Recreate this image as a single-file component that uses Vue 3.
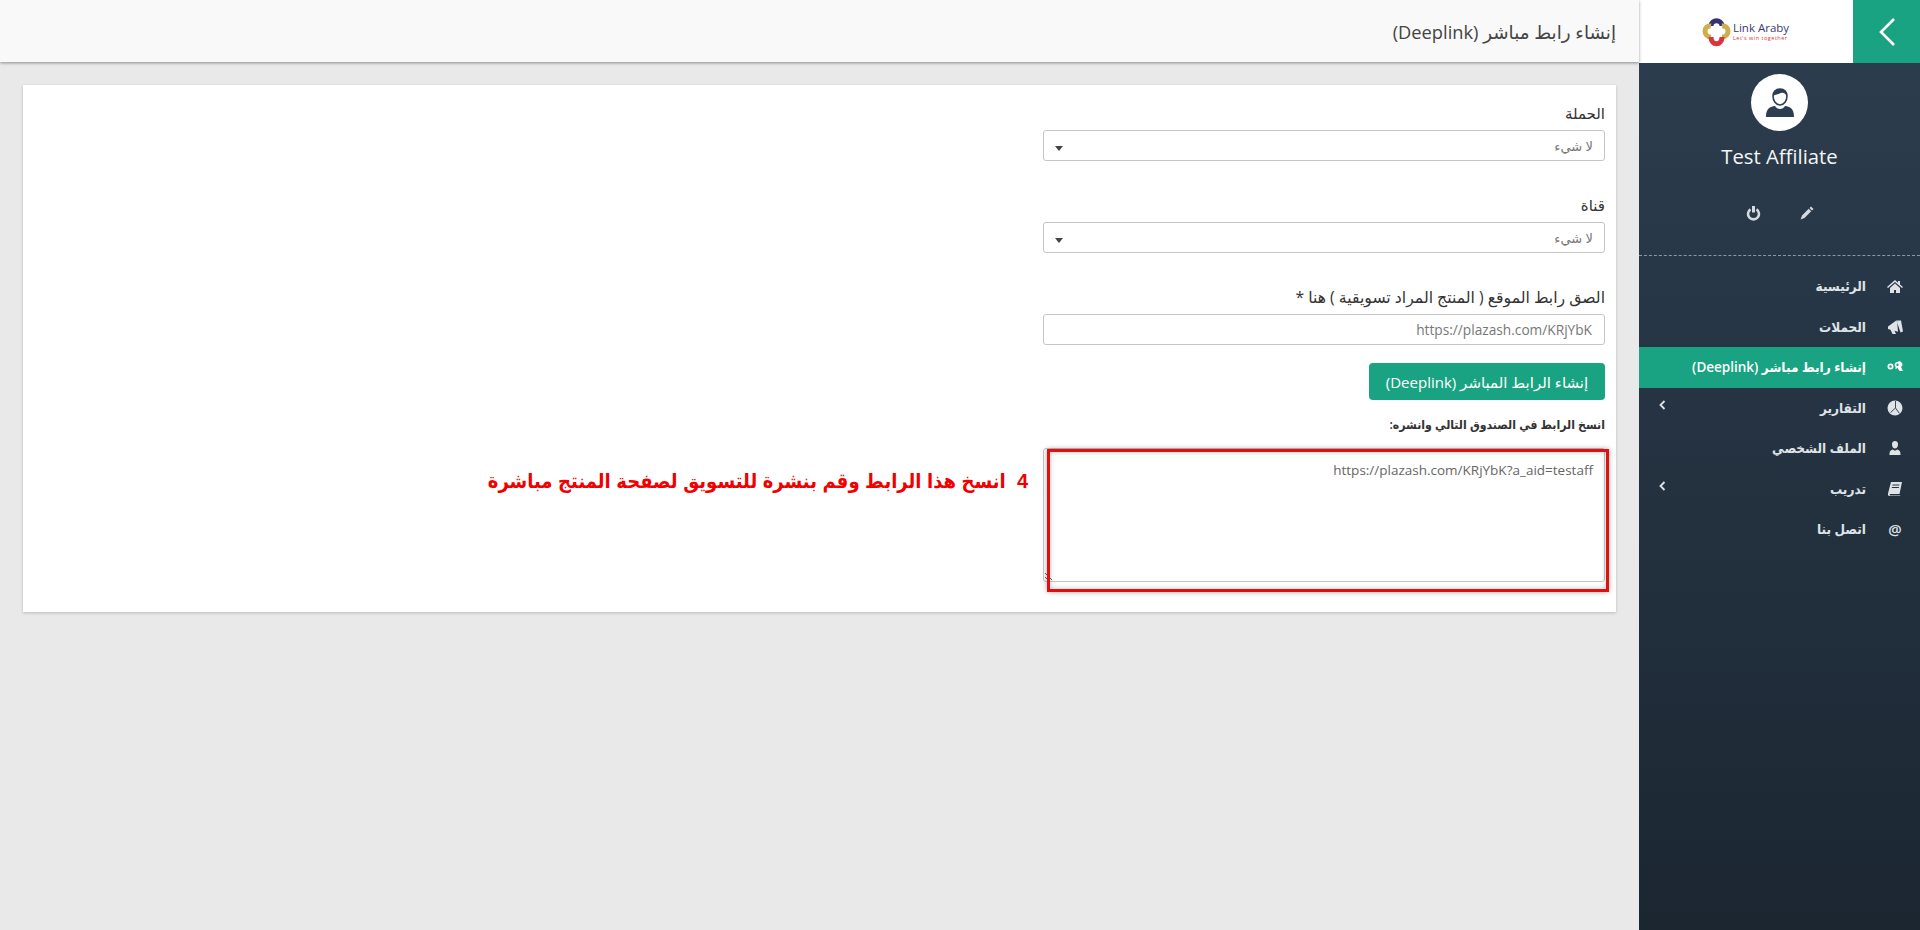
<script setup>
const menu = [
  { label: 'الرئيسية', icon: 'home' },
  { label: 'الحملات', icon: 'horn' },
  { label: 'إنشاء رابط مباشر (Deeplink)', icon: 'link', active: true },
  { label: 'التقارير', icon: 'pie', sub: true },
  { label: 'الملف الشخصي', icon: 'user' },
  { label: 'تدريب', icon: 'book', sub: true },
  { label: 'اتصل بنا', icon: 'at' }
]
const fields = [
  { label: 'الحملة' },
  { label: 'قناة' }
]
</script>

<template>
  <div class="page" dir="rtl">
    <aside class="side">
      <div class="brand">
        <button class="toggle" aria-label="toggle">
          <svg width="18" height="30" viewBox="0 0 18 30"><path d="M16 2 3 15l13 13" fill="none" stroke="#fff" stroke-width="2.6"/></svg>
        </button>
        <div class="logo" dir="ltr">
          <svg width="31" height="32" viewBox="0 0 31 32">
            <path d="M10 10C10 3 21 3 21 10" fill="none" stroke="#34336f" stroke-width="5"/>
            <path d="M10 10C2 9 2 21 10 21" fill="none" stroke="#cfae4e" stroke-width="5"/>
            <path d="M21 10C29 9 29 21 21 21" fill="none" stroke="#cfae4e" stroke-width="5"/>
            <path d="M10 21C10 30 21 30 21 21" fill="none" stroke="#d8363c" stroke-width="5"/>
          </svg>
          <div class="logo-text">
            <span class="logo-name">Link Araby</span>
            <span class="logo-tag">Let's win together</span>
          </div>
        </div>
      </div>
      <div class="profile">
        <div class="avatar">
          <svg width="28" height="30" viewBox="0 0 28 30">
            <path d="M14 1c4.500 0 7 3 7 7 0 4.500-3 9-7 9s-7-4.500-7-9c0-4 2.500-7 7-7z" fill="none" stroke="#2c3e50" stroke-width="1.600"/>
            <path d="M7 8c0-4 3-7 7-7s7 3 7 7c-2-3-4-4-6-3-2 1-5 1-8 3z" fill="#2c3e50"/>
            <path d="M0 29c0-6 2-9 5-10 2-.7 3-1 4-1 1 2 3 3 5 3s4-1 5-3c1 0 2 .3 4 1 3 1 5 4 5 10z" fill="#2c3e50"/>
          </svg>
        </div>
        <div class="name" dir="ltr">Test Affiliate</div>
        <div class="tools">
          <svg width="14" height="14" viewBox="0 0 14 14"><path d="M11 .5 13.500 3 12 4.500 9.500 2zM8.700 2.800l2.500 2.500L4.500 12 .6 13.400 2 9.500z" fill="#d5dade"/></svg>
          <svg width="15" height="16" viewBox="0 0 15 16"><path d="M4.500 4.300a5.500 5.500 0 1 0 6 0" fill="none" stroke="#d5dade" stroke-width="2.600"/><path d="M7.500 1v6.500" stroke="#d5dade" stroke-width="3"/></svg>
        </div>
      </div>
      <nav class="menu">
        <a v-for="item in menu" :key="item.label" class="item" :class="{ active: item.active }">
          <span v-if="item.icon === 'at'" class="ico at">@</span>
          <svg v-else class="ico" width="16" height="16" viewBox="0 0 16 16" fill="currentColor">
            <path v-if="item.icon === 'home'" d="M8 2 0 9l1 1 7-6 7 6 1-1-3-2.600V3h-2v1.700zM3 10v5h4v-3h2v3h4v-5L8 5.500z"/>
            <path v-else-if="item.icon === 'horn'" d="M10 1 1 7.500v2.500l2.500.8L5.500 15H9l-1.500-3.300 3.500 1zM9.500 1.500l4.500 0 2 11-2.500 1z"/>
            <path v-else-if="item.icon === 'link'" fill-rule="evenodd" d="M3.500 4.500a3 3 0 1 0 0 6 3 3 0 0 0 3-3 3 3 0 0 0-3-3zm0 1.700a1.300 1.300 0 1 1 0 2.600 1.300 1.300 0 0 1 0-2.600zM10.500 3a2.800 2.800 0 0 0-1.500 5.200L8 9l1 1 1.500-1.200 2 3.200H16l-2-4a2.800 2.800 0 0 0-3.500-5zm0 1.600a1.200 1.200 0 1 1 0 2.400 1.200 1.200 0 0 1 0-2.400z"/>
            <g v-else-if="item.icon === 'pie'">
              <circle cx="8" cy="8" r="7.500"/>
              <path d="M8.500 1v7l-5 4.500M8.500 8l4 5.500" fill="none" stroke="#2a3a48" stroke-width=".9"/>
            </g>
            <path v-else-if="item.icon === 'user'" d="M8 1a3 3 0 0 0-3 3.500C5 7 6.500 8.500 8 8.500S11 7 11 4.500A3 3 0 0 0 8 1zM2.500 15c0-3 .5-5 3.500-5.500.6.800 1.200 1 2 1s1.400-.2 2-1c3 .5 3.500 2.500 3.500 5.500z"/>
            <path v-else-if="item.icon === 'book'" d="M4 1h11l-2.500 12H3a1 1 0 0 0 0 1.500h10.500L13 15H2.500C1 15 .8 13.500 1 12.500zM5.500 3.500l-.2 1h7l.2-1zm-.5 2.500-.2 1h7l.2-1z"/>
          </svg>
          <span class="lbl">{{ item.label }}</span>
          <svg v-if="item.sub" class="chev" width="7" height="10" viewBox="0 0 7 10"><path d="M5.500 1 1.500 5l4 4" fill="none" stroke="currentColor" stroke-width="1.800"/></svg>
        </a>
      </nav>
    </aside>

    <div class="main">
      <header class="top">
        <h1>إنشاء رابط مباشر (Deeplink)</h1>
      </header>
      <section class="card">
        <div class="col">
          <div v-for="f in fields" :key="f.label" class="group">
            <label>{{ f.label }}</label>
            <div class="select"><span>لا شيء</span><i class="caret"></i></div>
          </div>
          <div class="group short">
            <label class="long">الصق رابط الموقع ( المنتج المراد تسويقية ) هنا *</label>
            <input class="input" dir="ltr" readonly value="https://plazash.com/KRjYbK" />
          </div>
          <button class="btn">إنشاء الرابط المباشر (Deeplink)</button>
          <p class="hint">انسخ الرابط في الصندوق التالي وانشره:</p>
        </div>
        <div class="result-row">
          <div class="area-wrap">
            <textarea class="area" readonly>https://plazash.com/KRjYbK?a_aid=testaff</textarea>
            <div class="redbox"></div>
          </div>
          <div class="note">4&nbsp; انسخ هذا الرابط وقم بنشرة للتسويق لصفحة المنتج مباشرة</div>
        </div>
      </section>
    </div>
  </div>
</template>

<style>
html, body { margin: 0; background: #e9e9e9; }
</style>

<style scoped>
.page {
  display: flex;
  height: 930px;
  overflow: hidden;
  background: #e9e9e9;
  font-family: "Open Sans", "Noto Sans", "DejaVu Sans", sans-serif;
  color: #3a3a3a;
}
.side {
  width: 281px;
  flex: none;
  background: linear-gradient(180deg, #2d3e50 0%, #1b2631 100%);
  color: #dfe3e6;
}
.brand { display: flex; height: 63px; background: #fff; }
.toggle {
  width: 67px;
  border: 0;
  padding: 0;
  background: #1aa382;
  display: flex;
  align-items: center;
  justify-content: center;
}
.logo {
  flex: 1;
  display: flex;
  align-items: center;
  justify-content: center;
  gap: 1px;
  padding-right: 2px;
}
.logo-text { display: flex; flex-direction: column; line-height: 1; }
.logo-name { font-size: 11.500px; color: #3b3a72; }
.logo-tag { font-size: 5.500px; color: #d8363c; letter-spacing: .5px; margin-top: 2px; }
.profile {
  height: 192px;
  border-bottom: 1px dashed #8b97a2;
  display: flex;
  flex-direction: column;
  align-items: center;
}
.avatar {
  width: 57px;
  height: 57px;
  margin-top: 11px;
  border-radius: 50%;
  background: #fff;
  display: flex;
  align-items: center;
  justify-content: center;
}
.name { margin-top: 12px; font-size: 20.300px; line-height: 26px; color: #f4f6f7; }
.tools { margin-top: 36px; width: 68px; display: flex; justify-content: space-between; align-items: center; }
.menu { margin-top: 10px; }
.item {
  position: relative;
  display: flex;
  align-items: center;
  height: 40.500px;
  padding-right: 17px;
  font-family: "Open Sans", "DejaVu Sans Condensed", "DejaVu Sans", sans-serif;
  font-size: 13.500px;
  font-weight: 600;
  color: #dfe3e6;
}
.item.active { background: #1aa382; color: #fff; }
.ico { flex: none; width: 16px; margin-left: 21px; }
.at { font-size: 15px; line-height: 20px; text-align: center; }
.lbl { white-space: nowrap; }
.chev { position: absolute; left: 20px; top: 12px; }
.main { flex: 1; min-width: 0; }
.top {
  height: 62px;
  padding: 0 23px;
  display: flex;
  align-items: center;
  background: #f9f9f9;
  box-shadow: 0 1px 3px rgba(0,0,0,.4);
}
.top h1 { margin: 0; font-size: 18.300px; font-weight: 400; color: #444; }
.card {
  margin: 23px 23px 0;
  height: 527px;
  box-sizing: border-box;
  padding: 18px 11px 0;
  background: #fff;
  box-shadow: 0 1px 3px rgba(0,0,0,.2);
}
.col { width: 562px; }
.group { height: 92px; }
.group.short { height: 76px; }
label { display: block; height: 27px; font-size: 15px; line-height: 20px; color: #333; }
label.long { font-size: 15.700px; }
.select, .input {
  box-sizing: border-box;
  width: 100%;
  height: 31px;
  border: 1px solid #c6c6c6;
  border-radius: 3px;
  background: #fff;
  font: inherit;
  font-size: 13px;
  color: #777;
}
.select { display: flex; align-items: center; justify-content: space-between; padding: 0 11px; }
.caret { width: 0; height: 0; border: 4.500px solid transparent; border-top: 5px solid #444; border-bottom: 0; margin-top: 5px; }
.input { display: block; padding: 0 12px; text-align: right; outline: none; font-size: 13.700px; }
.btn {
  display: block;
  height: 37px;
  width: 236px;
  padding: 0;
  border: 0;
  border-radius: 4px;
  background: #1aa382;
  color: #fff;
  font: inherit;
  font-size: 15px;
}
.hint {
  margin: 15px 0 0;
  height: 33px;
  font-family: "Open Sans", "DejaVu Sans Condensed", "DejaVu Sans", sans-serif;
  font-size: 12.200px;
  font-weight: 600;
  line-height: 20px;
  color: #333;
}
.result-row { display: flex; align-items: flex-start; }
.area-wrap { position: relative; width: 562px; height: 134px; flex: none; }
.area {
  display: block;
  box-sizing: border-box;
  width: 100%;
  height: 134px;
  padding: 12px 11px;
  border: 1px solid #c6c6c6;
  border-radius: 3px;
  outline: none;
  font: inherit;
  font-size: 13.500px;
  color: #666;
  text-align: right;
  resize: both;
}
.redbox {
  position: absolute;
  left: 4px;
  right: -4px;
  top: 1px;
  height: 143px;
  border: 3px solid #e01010;
  box-sizing: border-box;
  box-shadow: 0 0 5px rgba(0,0,0,.35), inset 0 0 5px rgba(0,0,0,.25);
  pointer-events: none;
}
.note {
  margin: 19px 15px 0 0;
  font-family: "Liberation Sans", "DejaVu Sans Condensed", "DejaVu Sans", sans-serif;
  font-size: 20px;
  line-height: 28px;
  font-weight: 700;
  color: #f00000;
  white-space: nowrap;
}
</style>
